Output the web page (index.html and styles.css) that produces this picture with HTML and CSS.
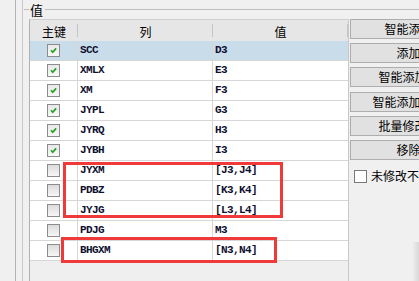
FILE: index.html
```html
<!DOCTYPE html>
<html lang="zh">
<head>
<meta charset="utf-8">
<link rel="stylesheet" href="styles.css">
</head>
<body>
<div class="panel">
  <div class="group">
    <div class="legend"><span class="legend-text">值</span></div>
    <div class="main">
      <div class="grid">
        <div class="row head">
          <div class="hcell">主键</div>
          <div class="hcell">列</div>
          <div class="hcell">值</div>
        </div>
        <div class="row sel"><div class="cell ck"><span class="box on"><svg viewBox="0 0 13 13"><path d="M3.5 6.2 L5.6 8.6 L9.6 4" /></svg></span></div><div class="cell">SCC</div><div class="cell">D3</div></div>
        <div class="row"><div class="cell ck"><span class="box on"><svg viewBox="0 0 13 13"><path d="M3.5 6.2 L5.6 8.6 L9.6 4" /></svg></span></div><div class="cell">XMLX</div><div class="cell">E3</div></div>
        <div class="row"><div class="cell ck"><span class="box on"><svg viewBox="0 0 13 13"><path d="M3.5 6.2 L5.6 8.6 L9.6 4" /></svg></span></div><div class="cell">XM</div><div class="cell">F3</div></div>
        <div class="row"><div class="cell ck"><span class="box on"><svg viewBox="0 0 13 13"><path d="M3.5 6.2 L5.6 8.6 L9.6 4" /></svg></span></div><div class="cell">JYPL</div><div class="cell">G3</div></div>
        <div class="row"><div class="cell ck"><span class="box on"><svg viewBox="0 0 13 13"><path d="M3.5 6.2 L5.6 8.6 L9.6 4" /></svg></span></div><div class="cell">JYRQ</div><div class="cell">H3</div></div>
        <div class="row"><div class="cell ck"><span class="box on"><svg viewBox="0 0 13 13"><path d="M3.5 6.2 L5.6 8.6 L9.6 4" /></svg></span></div><div class="cell">JYBH</div><div class="cell">I3</div></div>
        <div class="row"><div class="cell ck"><span class="box"></span></div><div class="cell">JYXM</div><div class="cell">[J3,J4]</div></div>
        <div class="row"><div class="cell ck"><span class="box"></span></div><div class="cell">PDBZ</div><div class="cell">[K3,K4]</div></div>
        <div class="row"><div class="cell ck"><span class="box"></span></div><div class="cell">JYJG</div><div class="cell">[L3,L4]</div></div>
        <div class="row"><div class="cell ck"><span class="box"></span></div><div class="cell">PDJG</div><div class="cell">M3</div></div>
        <div class="row"><div class="cell ck"><span class="box"></span></div><div class="cell">BHGXM</div><div class="cell">[N3,N4]</div></div>
      </div>
      <div class="side">
        <button class="btn">智能添加</button>
        <button class="btn">添加</button>
        <button class="btn">智能添加列</button>
        <button class="btn">智能添加全部</button>
        <button class="btn">批量修改值</button>
        <button class="btn">移除</button>
        <label class="opt"><span class="obox"></span><span class="otext">未修改不更新</span></label>
      </div>
    </div>
  </div>
</div>
<div class="mark mark1"></div>
<div class="mark mark2"></div>
<div class="shade"></div>
</body>
</html>
```
FILE: styles.css
```css
* { box-sizing: border-box; }
html, body {
  margin: 0;
  padding: 0;
  width: 419px;
  height: 281px;
  overflow: hidden;
  background: #f0f0f0;
  font-family: "Noto Sans CJK SC", "Noto Sans", sans-serif;
  color: #000;
}
body { position: relative; }

.panel {
  margin-left: 15px;
  height: 281px;
  border-left: 1px solid #b4b4b4;
  padding-left: 6px;
}
.group {
  height: 100%;
  border-left: 1px solid #c8c8c8;
  display: flex;
  flex-direction: column;
}
.legend {
  height: 19px;
  margin-left: 1px;
  display: flex;
  align-items: center;
}
.legend::before {
  content: "";
  width: 5px;
  border-top: 1px solid #bdbdbd;
}
.legend::after {
  content: "";
  flex: 1;
  border-top: 1px solid #bdbdbd;
}
.legend-text {
  font-size: 13px;
  line-height: 19px;
  padding: 0 2px 0 1px;
}

.main {
  flex: 1;
  display: flex;
  padding-left: 6px;
  min-height: 0;
}
.grid {
  width: 320px;
  flex: none;
  border-left: 1px solid #b0b0b0;
  border-right: 1px solid #c8c8c8;
  border-top: 1px solid #d0d0d0;
  background: #efefef;
}
.row {
  display: grid;
  grid-template-columns: 48px 135px 135px;
  height: 20px;
  border-bottom: 1px solid #d6d6d6;
  background: #fff;
}
.row.head {
  height: 21px;
  border-bottom: none;
  background: #e6e6e6;
}
.row.sel { background: #c9dcea; }
.hcell {
  font-size: 12px;
  line-height: 21px;
  padding-top: 1px;
  text-align: center;
  background: linear-gradient(#c4c4c4, #c4c4c4) no-repeat right 0 top 4px / 1px 13px;
}
.cell {
  border-right: 1px solid #d6d6d6;
  font-family: "Liberation Mono", monospace;
  font-weight: bold;
  font-size: 11px;
  letter-spacing: -0.6px;
  line-height: 19px;
  padding-left: 2px;
  color: #101030;
}
.cell:last-child { border-right: none; }
.cell.ck {
  display: flex;
  align-items: center;
  justify-content: center;
  padding-left: 0;
  padding-right: 1px;
}
.box {
  width: 13px;
  height: 13px;
  border: 1px solid #8c8c8c;
  background: linear-gradient(#dcdcdc, #f6f6f6);
  display: block;
}
.box.on { background: linear-gradient(#e8e8e8, #f8f8f8); }
.box svg {
  display: block;
  width: 11px;
  height: 11px;
  margin: 0;
}
.box svg path {
  fill: none;
  stroke: #21a121;
  stroke-width: 2;
}

.side {
  display: flex;
  flex-direction: column;
  padding-left: 1px;
}
.btn {
  width: 117px;
  height: 20px;
  margin: 0 0 4.2px 0;
  padding: 0;
  border: 1px solid #adadad;
  background: #e1e1e1;
  font-family: "Noto Sans CJK SC", sans-serif;
  font-size: 12px;
  line-height: 18px;
  color: #000;
  text-align: center;
  white-space: nowrap;
  flex: none;
}
.opt {
  display: flex;
  align-items: center;
  margin-top: 4px;
  padding-left: 4px;
  white-space: nowrap;
}
.obox {
  width: 13px;
  height: 13px;
  border: 1px solid #7a7a7a;
  background: #fff;
  flex: none;
}
.otext {
  font-size: 12px;
  line-height: 16px;
  margin-left: 4px;
}

.mark {
  position: absolute;
  border: 3px solid #f03a3a;
}
.mark1 { left: 63px; top: 162px; width: 220px; height: 56px; }
.mark2 { left: 61px; top: 237px; width: 216px; height: 26px; }

.shade {
  position: absolute;
  right: 0;
  top: 242px;
  bottom: 0;
  width: 7px;
  background: linear-gradient(to right, rgba(0,0,0,0), rgba(0,0,0,0.10));
}
```
